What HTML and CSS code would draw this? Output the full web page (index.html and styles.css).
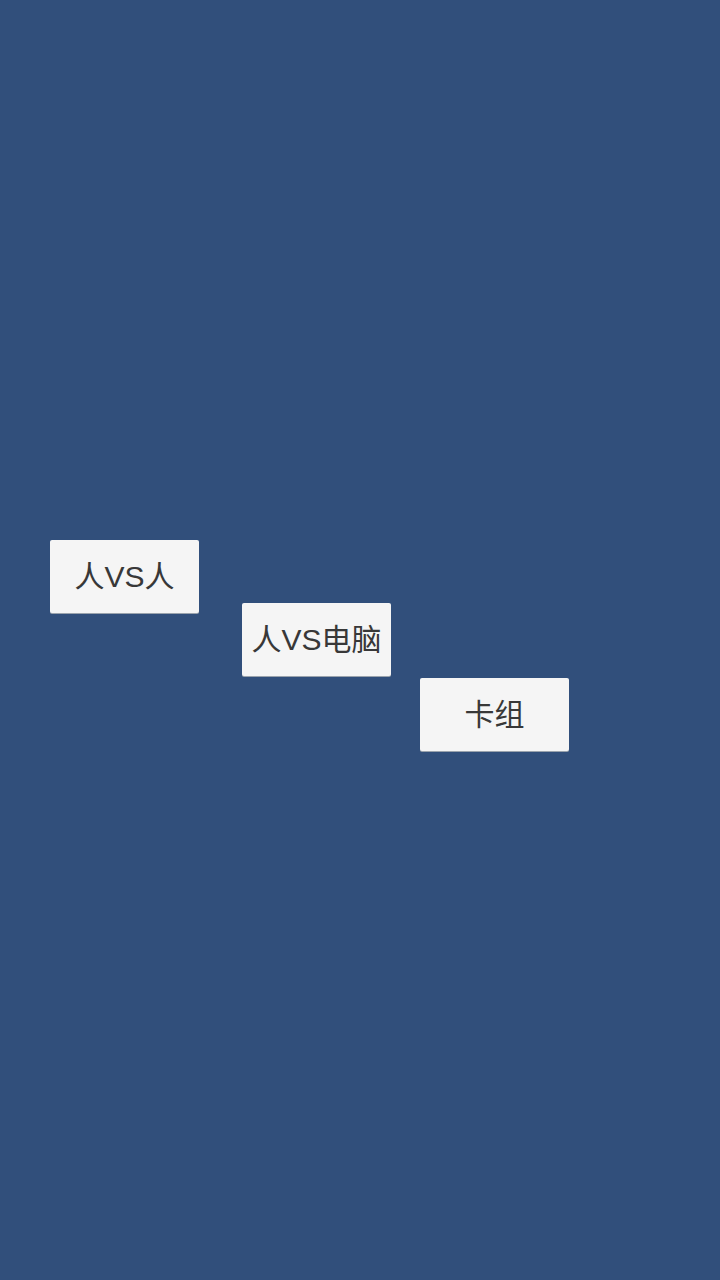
FILE: index.html
```html
<!DOCTYPE html>
<html lang="zh">
<head>
<meta charset="utf-8">
<link rel="stylesheet" href="styles.css">
</head>
<body>
<main class="menu">
  <button class="btn btn-pvp">人VS人</button>
  <button class="btn btn-pve">人VS电脑</button>
  <button class="btn btn-deck">卡组</button>
</main>
</body>
</html>
```

FILE: styles.css
```css
html, body {
  margin: 0;
  padding: 0;
  width: 720px;
  height: 1280px;
  background: #314f7b;
  overflow: hidden;
}
.menu {
  display: flex;
  flex-direction: column;
  align-items: flex-start;
  padding-top: 540px;
}
.btn {
  width: 149px;
  height: 73px;
  padding: 0 0 5px 0;
  border: none;
  border-radius: 2px;
  background: #f5f5f5;
  box-shadow: 0 1px 0 #9aa3ad;
  color: #383838;
  font-family: "Liberation Sans", "Noto Sans CJK SC", sans-serif;
  font-size: 30px;
  display: flex;
  align-items: center;
  justify-content: center;
}
.btn-pvp { margin-left: 50px; }
.btn-pve { margin-left: 242px; margin-top: -10px; }
.btn-deck { margin-left: 420px; margin-top: 2px; }
```
